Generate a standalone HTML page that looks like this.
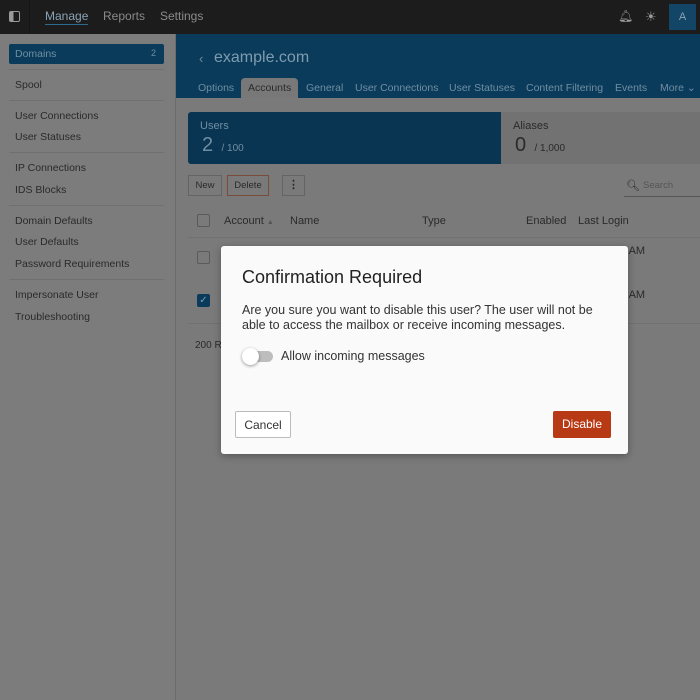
<!DOCTYPE html>
<html><head><style>
*{margin:0;padding:0;box-sizing:border-box}
body{width:700px;height:700px;overflow:hidden;background:#7a7a7a;font-family:"Liberation Sans",sans-serif;position:relative}
.a{position:absolute;white-space:nowrap}
.top{left:0;top:0;width:700px;height:34px;background:#1c1c1c}
.side{left:0;top:34px;width:176px;height:666px;background:#7c7c7c;border-right:1px solid #6c6c6c}
.si{left:15px;font-size:10.5px;color:#2a2a2a}
.hr{left:9px;width:155px;height:1px;background:#707070}
.blue{left:176px;top:34px;width:524px;height:64px;background:#0b3b5a}
.tab{top:82px;font-size:10.5px;color:#6f8ea3}
.t{font-size:11px;color:#2a2a2a}
.cb{width:13px;height:13px;border:1px solid #5a5a5a;border-radius:2px}
</style></head><body>
<div class="a top"></div>
<div class="a" style="left:9px;top:11px;width:11px;height:11px;border:1.5px solid #9a9a9a;border-radius:2px;background:linear-gradient(90deg,#9a9a9a 40%,transparent 40%)"></div>
<div class="a" style="left:29px;top:0;width:1px;height:34px;background:#151515"></div>
<div class="a" style="left:45px;top:9px;font-size:12px;color:#8aa3b5;border-bottom:1px solid #2d6a92;line-height:15px">Manage</div>
<div class="a" style="left:103px;top:9px;font-size:12px;color:#8a8a8a;line-height:15px">Reports</div>
<div class="a" style="left:160px;top:9px;font-size:12px;color:#8a8a8a;line-height:15px">Settings</div>
<div class="a" style="left:618px;top:9px;font-size:12px;color:#9a9a9a">&#x1F514;&#xFE0E;</div>
<div class="a" style="left:645px;top:9px;font-size:13px;color:#9a9a9a">☀</div>
<div class="a" style="left:669px;top:4px;width:27px;height:26px;background:#124566;color:#8aa3b5;font-size:11px;text-align:center;line-height:26px">A</div>

<div class="a side"></div>
<div class="a" style="left:9px;top:44px;width:155px;height:20px;background:#0b3b5a;border-radius:2px"></div>
<div class="a" style="left:15px;top:48px;font-size:10.5px;color:#6f8ea3">Domains</div>
<div class="a" style="left:151px;top:48px;font-size:9px;color:#6f8ea3">2</div>
<div class="a hr" style="top:69px"></div>
<div class="a si" style="top:79px">Spool</div>
<div class="a hr" style="top:100px"></div>
<div class="a si" style="top:110px">User Connections</div>
<div class="a si" style="top:131px">User Statuses</div>
<div class="a hr" style="top:152px"></div>
<div class="a si" style="top:162px">IP Connections</div>
<div class="a si" style="top:184px">IDS Blocks</div>
<div class="a hr" style="top:205px"></div>
<div class="a si" style="top:215px">Domain Defaults</div>
<div class="a si" style="top:236px">User Defaults</div>
<div class="a si" style="top:258px">Password Requirements</div>
<div class="a hr" style="top:279px"></div>
<div class="a si" style="top:289px">Impersonate User</div>
<div class="a si" style="top:311px">Troubleshooting</div>

<div class="a blue"></div>
<div class="a" style="left:199px;top:51px;font-size:13px;color:#6f8ea3">‹</div>
<div class="a" style="left:214px;top:49px;font-size:16px;color:#7f9bb0">example.com</div>
<div class="a" style="left:241px;top:78px;width:57px;height:20px;background:#787878;border-radius:4px 4px 0 0"></div>
<div class="a tab" style="left:198px">Options</div>
<div class="a tab" style="left:248px;color:#2a2a2a">Accounts</div>
<div class="a tab" style="left:306px">General</div>
<div class="a tab" style="left:355px">User Connections</div>
<div class="a tab" style="left:449px">User Statuses</div>
<div class="a tab" style="left:526px">Content Filtering</div>
<div class="a tab" style="left:615px">Events</div>
<div class="a tab" style="left:660px">More ⌄</div>

<div class="a" style="left:188px;top:112px;width:313px;height:52px;background:#093553;border-radius:3px 0 0 3px"></div>
<div class="a" style="left:200px;top:120px;font-size:11px;color:#6f8ea3">Users</div>
<div class="a" style="left:202px;top:134px;font-size:20px;color:#6f8ea3">2 <span style="font-size:10px">&nbsp;/ 100</span></div>
<div class="a" style="left:501px;top:112px;width:199px;height:52px;background:#727272"></div>
<div class="a" style="left:513px;top:120px;font-size:11px;color:#2a2a2a">Aliases</div>
<div class="a" style="left:515px;top:134px;font-size:20px;color:#2a2a2a">0 <span style="font-size:10px">&nbsp;/ 1,000</span></div>

<div class="a" style="left:188px;top:175px;width:34px;height:21px;border:1px solid #646464;font-size:9.5px;color:#2a2a2a;text-align:center;line-height:19px">New</div>
<div class="a" style="left:227px;top:175px;width:42px;height:21px;border:1px solid #7a4a3a;font-size:9.5px;color:#2a2a2a;text-align:center;line-height:19px">Delete</div>
<div class="a" style="left:282px;top:175px;width:23px;height:21px;border:1px solid #646464;font-size:11px;color:#2a2a2a;text-align:center;line-height:19px;font-weight:bold">⋮</div>
<div class="a" style="left:626px;top:179px;font-size:11px;color:#2a2a2a">&#x1F50D;&#xFE0E;</div>
<div class="a" style="left:643px;top:180px;font-size:9.5px;color:#555">Search</div>
<div class="a" style="left:624px;top:196px;width:76px;height:1px;background:#555"></div>

<div class="a cb" style="left:197px;top:214px"></div>
<div class="a t" style="left:224px;top:215px">Account <span style="font-size:7px;color:#555">▲</span></div>
<div class="a t" style="left:290px;top:215px">Name</div>
<div class="a t" style="left:422px;top:215px">Type</div>
<div class="a t" style="left:526px;top:215px">Enabled</div>
<div class="a t" style="left:578px;top:215px">Last Login</div>
<div class="a" style="left:188px;top:237px;width:512px;height:1px;background:#717171"></div>
<div class="a cb" style="left:197px;top:251px"></div>
<div class="a cb" style="left:197px;top:294px;background:#0b3b5a;border-color:#0b3b5a;color:#7f9bb0;font-size:10px;line-height:11px;text-align:center">✓</div>
<div class="a t" style="left:620px;top:245px">8 AM</div>
<div class="a t" style="left:620px;top:289px">1 AM</div>
<div class="a" style="left:188px;top:323px;width:512px;height:1px;background:#717171"></div>
<div class="a" style="left:195px;top:340px;font-size:10px;color:#2a2a2a">200 R</div>

<div class="a" style="left:221px;top:246px;width:407px;height:208px;background:#fafafa;border-radius:3px;box-shadow:0 2px 8px rgba(0,0,0,.3)"></div>
<div class="a" style="left:242px;top:267px;font-size:18px;color:#222">Confirmation Required</div>
<div class="a" style="left:242px;top:303px;font-size:12.5px;color:#333;line-height:15px">Are you sure you want to disable this user? The user will not be<br>able to access the mailbox or receive incoming messages.</div>
<div class="a" style="left:245px;top:351px;width:28px;height:11px;background:#bdbdbd;border-radius:6px"></div>
<div class="a" style="left:242px;top:348px;width:17px;height:17px;background:#fff;border-radius:50%;box-shadow:0 1px 3px rgba(0,0,0,.4)"></div>
<div class="a" style="left:281px;top:349px;font-size:12.5px;color:#333">Allow incoming messages</div>
<div class="a" style="left:235px;top:411px;width:56px;height:27px;border:1px solid #bbb;font-size:12px;color:#333;text-align:center;line-height:26px;border-radius:2px;background:#fff">Cancel</div>
<div class="a" style="left:553px;top:411px;width:58px;height:27px;background:#b83a15;font-size:12px;color:#fff;text-align:center;line-height:27px;border-radius:2px">Disable</div>
</body></html>
